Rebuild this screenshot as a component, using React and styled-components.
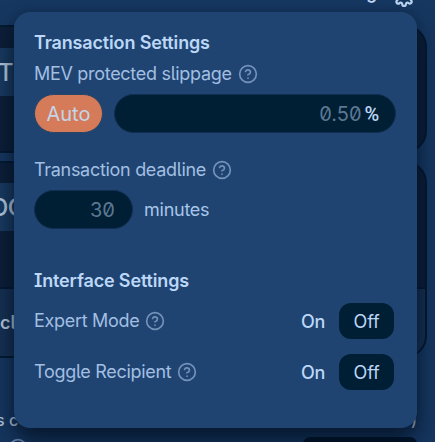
import React from "react";
import styled, { createGlobalStyle } from "styled-components";

const Global = createGlobalStyle`
  * { box-sizing: border-box; }
  html, body { margin: 0; height: 100%; overflow: hidden; background: #163760; }
  body { font-family: Inter, "Liberation Sans", sans-serif; font-feature-settings: "ss02" 1, "calt" 0; color: #a9c5e8; }
  button, input { font: inherit; font-feature-settings: inherit; }
`;

const Page = styled.main`
  position: relative;
  width: 435px;
  height: 442px;
  overflow: hidden;
  background: #163760;
`;

const Backdrop = styled.div`
  display: flex;
  flex-direction: column;
  width: 457px;
  margin-left: -30px;
  height: 442px;
`;

const TopBar = styled.header`
  display: flex;
  justify-content: flex-end;
  gap: 16px;
  height: 25px;
  padding-right: 12px;
  color: #bcd5f2;
  font-size: 17px;
  font-weight: 600;
  line-height: 20px;
  flex-shrink: 0;
`;

const TopLabel = styled.span`
  margin-top: -17px;
`;

const GearIcon = styled.svg`
  width: 22px;
  height: 22px;
  margin-top: -15px;
`;

const TokenPanel = styled.section`
  height: ${(p) => p.$height}px;
  flex-shrink: 0;
  margin-bottom: 8px;
  border: 2px solid #031a31;
  border-radius: 22px;
  overflow: hidden;
  background: #0c1f38;
`;

const TokenChip = styled.div`
  height: 48px;
  width: 120px;
  margin-top: ${(p) => p.$top}px;
  padding-left: ${(p) => p.$indent}px;
  background: #183a60;
  color: #b5c9df;
  font-size: 24px;
  font-weight: 500;
  letter-spacing: -0.5px;
  line-height: 49px;
`;

const ReceiveRow = styled.div`
  height: 70px;
  margin-top: 56px;
  padding: 23px 0 0 28px;
  border-top: 2px solid #031a31;
  background: #163153;
  color: #b5c9df;
  font-size: 18px;
  font-weight: 600;
  line-height: 22px;
`;

const FeeRow = styled.div`
  display: flex;
  justify-content: space-between;
  padding: 44px 10px 0 26px;
  font-size: 16px;
  font-weight: 500;
  line-height: 20px;
  color: #b5c9df;
`;

const FeeNote = styled.div`
  display: flex;
  justify-content: space-between;
  padding: 7px 10px 0 38px;
  color: #6482a7;
`;

const FeeHelp = styled.span`
  padding-top: 1px;
`;

const FeeButton = styled.div`
  width: 114px;
  height: 32px;
  border-radius: 7px;
  background: #00142a;
`;

const Popover = styled.section`
  position: absolute;
  left: 14px;
  top: 12px;
  width: 403px;
  height: 416px;
  padding: 20px 21px 20px 20px;
  border-radius: 16px;
  background: #1f4471;
  box-shadow: 0 0 8px rgba(0, 12, 28, 0.22), 0 16px 24px rgba(0, 12, 28, 0.65);
`;

const Heading = styled.h2`
  margin: ${(p) => p.$top}px 0 0;
  font-size: 18px;
  font-weight: 600;
  line-height: 22px;
  letter-spacing: -0.15px;
  color: #bcd7f7;
`;

const Label = styled.div`
  display: flex;
  align-items: center;
  gap: 6px;
  height: 22px;
  margin-top: ${(p) => p.$top || 0}px;
  font-size: 18px;
  line-height: 22px;
  letter-spacing: -0.3px;
  color: #a2bfe2;
`;

const HelpSvg = styled.svg`
  width: 20px;
  height: 20px;
  display: block;
  color: #7392ba;
`;

const Controls = styled.div`
  display: flex;
  align-items: center;
  gap: 11px;
  margin-top: ${(p) => p.$top}px;
  font-size: 18px;
  letter-spacing: -0.25px;
`;

const AutoButton = styled.button`
  width: 69px;
  height: 39px;
  padding: 0;
  border: 1px solid #294566;
  border-radius: 20px;
  background: #d57b59;
  color: #c4d5e9;
  font-size: 20px;
`;

const Field = styled.label`
  display: flex;
  align-items: center;
  justify-content: flex-end;
  gap: 3px;
  width: ${(p) => p.$width}px;
  height: 39px;
  padding-right: ${(p) => p.$end}px;
  border: 1px solid #102e50;
  border-radius: 20px;
  background: #001e34;
`;

const Amount = styled.input.attrs({ type: "text" })`
  width: 60px;
  padding: 0;
  border: 0;
  outline: 0;
  background: transparent;
  color: #5b7791;
  font-size: 20px;
  letter-spacing: 0;
  text-align: right;
`;

const Percent = styled.span`
  color: #bcd7f7;
  font-family: Roboto, sans-serif;
  font-size: 20px;
  font-weight: 500;
`;

const SettingRow = styled.div`
  display: flex;
  align-items: center;
  justify-content: space-between;
  height: 36px;
  margin-top: ${(p) => p.$top}px;
  padding-right: 2px;
`;

const Toggle = styled.div`
  display: flex;
  height: 36px;
`;

const Option = styled.button`
  width: ${(p) => (p.$active ? 55 : 52)}px;
  padding: 0;
  border: 0;
  border-radius: 12px;
  background: ${(p) => (p.$active ? "#001e34" : "transparent")};
  color: #bcd7f7;
  font-size: 18px;
  font-weight: ${(p) => (p.$active ? 400 : 500)};
  letter-spacing: -0.2px;
`;

function Help() {
  return (
    <HelpSvg viewBox="0 0 24 24" fill="none" stroke="currentColor" strokeWidth="2" strokeLinecap="round" strokeLinejoin="round">
      <circle cx="12" cy="12" r="10" />
      <path d="M9.09 9a3 3 0 0 1 5.83 1c0 2-3 3-3 3" />
      <line x1="12" y1="17" x2="12.01" y2="17" />
    </HelpSvg>
  );
}

function Gear() {
  return (
    <GearIcon viewBox="0 0 24 24" fill="none" stroke="currentColor" strokeWidth="2.4">
      <circle cx="12" cy="12" r="3" />
      <path d="M19.4 15a1.65 1.65 0 0 0 .33 1.82l.06.06a2 2 0 1 1-2.83 2.83l-.06-.06a1.65 1.65 0 0 0-2.82 1.17V21a2 2 0 0 1-4 0v-.09A1.65 1.65 0 0 0 7.2 19.73l-.06.06a2 2 0 1 1-2.83-2.83l.06-.06A1.65 1.65 0 0 0 3.2 14H3a2 2 0 0 1 0-4h.09A1.65 1.65 0 0 0 4.6 9a1.65 1.65 0 0 0-.33-1.82l-.06-.06a2 2 0 1 1 2.83-2.83l.06.06A1.65 1.65 0 0 0 10 3.1V3a2 2 0 0 1 4 0v.09a1.65 1.65 0 0 0 2.82 1.17l.06-.06a2 2 0 1 1 2.83 2.83l-.06.06A1.65 1.65 0 0 0 20.9 10H21a2 2 0 0 1 0 4h-.09a1.65 1.65 0 0 0-1.51 1z" />
    </GearIcon>
  );
}

function Setting({ label, top }) {
  return (
    <SettingRow $top={top}>
      <Label>{label}<Help /></Label>
      <Toggle>
        <Option>On</Option>
        <Option $active>Off</Option>
      </Toggle>
    </SettingRow>
  );
}

export default function App() {
  return (
    <Page>
      <Global />
      <Backdrop>
        <TopBar><TopLabel>g</TopLabel><Gear /></TopBar>
        <TokenPanel $height={128}><TokenChip $top={21} $indent={26}>TH</TokenChip></TokenPanel>
        <TokenPanel $height={197}>
          <TokenChip $top={20} $indent={19}>DC</TokenChip>
          <ReceiveRow>cl</ReceiveRow>
        </TokenPanel>
        <FeeRow><span>s c</span><span>)</span></FeeRow>
        <FeeNote><FeeHelp><Help /></FeeHelp><FeeButton /></FeeNote>
      </Backdrop>
      <Popover>
        <Heading $top={0}>Transaction Settings</Heading>
        <Label $top={9}>MEV protected slippage<Help /></Label>
        <Controls $top={9}>
          <AutoButton>Auto</AutoButton>
          <Field $width={283} $end={16}><Amount defaultValue="0.50" /><Percent>%</Percent></Field>
        </Controls>
        <Label $top={26}>Transaction deadline<Help /></Label>
        <Controls $top={9}>
          <Field $width={99} $end={17}><Amount defaultValue="30" /></Field>
          <span>minutes</span>
        </Controls>
        <Heading $top={41}>Interface Settings</Heading>
        <Setting label="Expert Mode" top={11} />
        <Setting label="Toggle Recipient" top={15} />
      </Popover>
    </Page>
  );
}
